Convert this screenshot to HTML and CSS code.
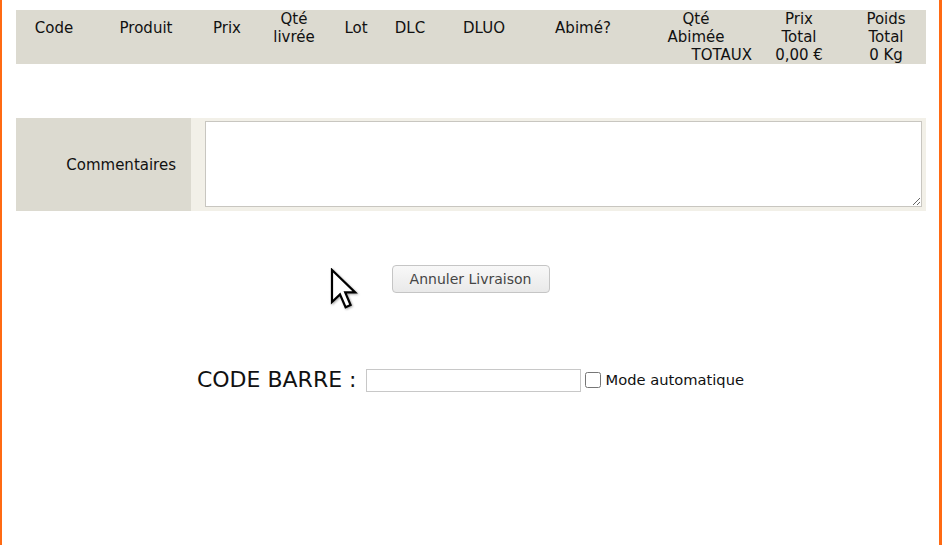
FILE: index.html
```html
<!DOCTYPE html>
<html lang="fr">
<head>
    <meta charset="UTF-8">
    <title>Livraison</title>
    <link rel="stylesheet" href="styles.css">
</head>
<body>
    <div class="page">
        <table class="lignes">
            <colgroup>
                <col style="width:76px"><col style="width:108px"><col style="width:54px">
                <col style="width:80px"><col style="width:44px"><col style="width:64px">
                <col style="width:84px"><col style="width:114px"><col style="width:112px">
                <col style="width:94px"><col style="width:80px">
            </colgroup>
            <thead>
                <tr class="titres">
                    <th>Code</th>
                    <th>Produit</th>
                    <th>Prix</th>
                    <th>Qté<br>livrée</th>
                    <th>Lot</th>
                    <th>DLC</th>
                    <th>DLUO</th>
                    <th>Abimé?</th>
                    <th class="haut">Qté<br>Abimée</th>
                    <th class="haut">Prix<br>Total</th>
                    <th class="haut">Poids<br>Total</th>
                </tr>
                <tr class="totaux">
                    <th colspan="9" class="libelle">TOTAUX</th>
                    <th>0,00 €</th>
                    <th>0 Kg</th>
                </tr>
            </thead>
        </table>

        <table class="commentaires">
            <tr>
                <td class="label">Commentaires</td>
                <td class="champ"><textarea></textarea></td>
            </tr>
        </table>

        <div class="actions">
            <button class="btn">Annuler Livraison</button>
        </div>

        <div class="scan">
            <span class="scan-titre">CODE BARRE :</span>
            <input type="text" class="scan-input">
            <label class="auto"><input type="checkbox"><span>Mode automatique</span></label>
        </div>

        <!-- pointeur de souris -->
        <svg class="curseur" width="28" height="42" viewBox="0 0 14 21">
            <path d="M1 1 L1 17 L5 13.2 L7.8 19.6 L10.3 18.5 L7.6 12.2 L12.6 12.2 Z" fill="#fff" stroke="#000" stroke-width="1.1" stroke-linejoin="miter"/>
        </svg>
    </div>
</body>
</html>
```

FILE: styles.css
```css
body {
    margin: 0;
    background: #fff;
    font-family: "DejaVu Sans", sans-serif;
    color: #111;
}

.page {
    position: relative;
    width: 937px;
    height: 545px;
    border-left: 2px solid #ff6a13;
    border-right: 3px solid #ff6a13;
    overflow: hidden;
}

/* Tableau des lignes */
.lignes {
    margin: 10px 0 0 14px;
    width: 910px;
    table-layout: fixed;
    border-collapse: collapse;
    background: #dcdad0;
}

.lignes th {
    font-weight: normal;
    font-size: 15px;
    line-height: 18px;
    padding: 0;
    text-align: center;
}

.titres th {
    height: 36px;
    vertical-align: middle;
}

.titres th.haut {
    vertical-align: top;
}

.totaux th {
    height: 18px;
}

.totaux .libelle {
    text-align: right;
}

/* Commentaires */
.commentaires {
    margin: 54px 0 0 14px;
    width: 910px;
    border-collapse: collapse;
}

.commentaires .label {
    width: 175px;
    background: #dcdad0;
    text-align: right;
    padding: 0 15px 0 0;
    font-size: 15px;
    box-sizing: border-box;
}

.commentaires .champ {
    background: #f2f0e8;
    padding: 3px 4px 4px 14px;
    line-height: 0;
}

.commentaires textarea {
    width: 717px;
    height: 86px;
    box-sizing: border-box;
    border: 1px solid #c8c6c0;
    margin: 0;
    resize: both;
}

/* Bouton */
.actions {
    display: flex;
    justify-content: center;
    margin-top: 54px;
}

.btn {
    width: 158px;
    height: 28px;
    font-family: "DejaVu Sans", sans-serif;
    font-size: 14px;
    color: #454545;
    background: linear-gradient(#f8f8f8, #e9e9e9);
    border: 1px solid #c5c5c5;
    border-radius: 4px;
    padding: 0;
}

/* Code barre */
.scan {
    display: flex;
    justify-content: center;
    align-items: center;
    margin-top: 74px;
}

.scan-titre {
    font-size: 22px;
    margin-right: 10px;
}

.scan-input {
    width: 215px;
    height: 23px;
    box-sizing: border-box;
    border: 1px solid #c8c8c8;
    margin: 2px 0 0 0;
    padding: 0 4px;
}

.auto {
    display: flex;
    align-items: center;
    font-size: 14.7px;
    margin-left: 4px;
}

.auto input {
    width: 16px;
    height: 16px;
    margin: 0 4px 0 0;
}

.curseur {
    position: absolute;
    left: 328px;
    top: 268px;
    filter: drop-shadow(1px 1px 1px rgba(0, 0, 0, 0.35));
}
```
